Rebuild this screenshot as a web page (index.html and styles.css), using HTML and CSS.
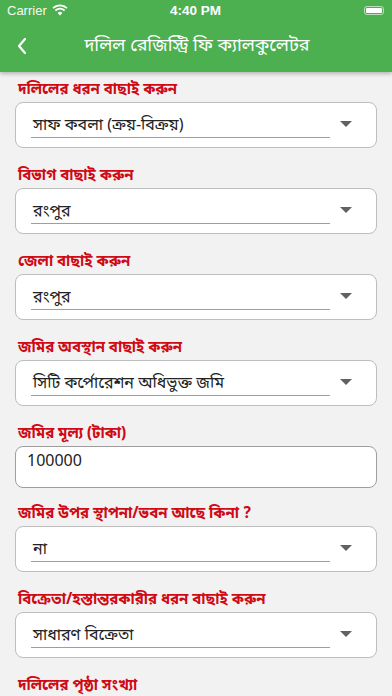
FILE: index.html
```html
<!DOCTYPE html>
<html lang="bn">
<head>
<meta charset="utf-8">
<link rel="stylesheet" href="styles.css">
</head>
<body>
<header class="appbar">
  <div class="status">
    <div class="status-left">
      <span class="carrier">Carrier</span>
      <svg class="wifi" width="16" height="12" viewBox="0 0 16 12"><path d="M8 11.5 L5.6 8.9 A3.4 3.4 0 0 1 10.4 8.9 Z" fill="#fff"/><path d="M3.4 6.6 A6.5 6.5 0 0 1 12.6 6.6" stroke="#fff" stroke-width="1.8" fill="none"/><path d="M1.1 4.2 A9.8 9.8 0 0 1 14.9 4.2" stroke="#fff" stroke-width="1.8" fill="none"/></svg>
    </div>
    <span class="time">4:40 PM</span>
    <div class="status-right">
      <div class="battery"><div class="battery-fill"></div></div>
    </div>
  </div>
  <div class="nav">
    <svg class="back" width="12" height="20" viewBox="0 0 12 20"><path d="M9 3 L3 10 L9 17" stroke="#fff" stroke-width="2.2" fill="none" stroke-linecap="round" stroke-linejoin="round"/></svg>
    <h1 class="title">দলিল রেজিস্ট্রি ফি ক্যালকুলেটর</h1>
  </div>
</header>
<main class="form">
  <div class="group">
    <label class="label">দলিলের ধরন বাছাই করুন</label>
    <div class="select"><span class="select-text">সাফ কবলা (ক্রয়-বিক্রয়)</span><span class="arrow"></span></div>
  </div>
  <div class="group">
    <label class="label">বিভাগ বাছাই করুন</label>
    <div class="select"><span class="select-text">রংপুর</span><span class="arrow"></span></div>
  </div>
  <div class="group">
    <label class="label">জেলা বাছাই করুন</label>
    <div class="select"><span class="select-text">রংপুর</span><span class="arrow"></span></div>
  </div>
  <div class="group">
    <label class="label">জমির অবস্থান বাছাই করুন</label>
    <div class="select"><span class="select-text">সিটি কর্পোরেশন অধিভুক্ত জমি</span><span class="arrow"></span></div>
  </div>
  <div class="group group-tight">
    <label class="label">জমির মূল্য (টাকা)</label>
    <div class="input">100000</div>
  </div>
  <div class="group">
    <label class="label">জমির উপর স্থাপনা/ভবন আছে কিনা ?</label>
    <div class="select"><span class="select-text">না</span><span class="arrow"></span></div>
  </div>
  <div class="group">
    <label class="label">বিক্রেতা/হস্তান্তরকারীর ধরন বাছাই করুন</label>
    <div class="select"><span class="select-text">সাধারণ বিক্রেতা</span><span class="arrow"></span></div>
  </div>
  <div class="group">
    <label class="label">দলিলের পৃষ্ঠা সংখ্যা</label>
  </div>
</main>
</body>
</html>
```
FILE: styles.css
```css
* { box-sizing: border-box; }
html, body { margin: 0; padding: 0; }
body {
  width: 392px;
  height: 696px;
  overflow: hidden;
  background: #f2f2f2;
  font-family: "Noto Sans Bengali", "Noto Sans", "Liberation Sans", sans-serif;
}
.appbar {
  background: #4caf50;
  height: 72px;
  box-shadow: 0 2px 4px rgba(0,0,0,0.25);
  position: relative;
  z-index: 1;
}
.status {
  height: 20px;
  display: flex;
  align-items: center;
  justify-content: space-between;
  padding: 0 8px 0 7px;
  color: #fff;
  font-family: "Liberation Sans", Arial, sans-serif;
}
.status-left, .status-right { display: flex; align-items: center; width: 90px; }
.status-right { justify-content: flex-end; }
.carrier { font-size: 13px; margin-right: 5px; opacity: 0.95; }
.time { font-size: 13.5px; font-weight: bold; }
.battery {
  width: 20px;
  height: 9px;
  border: 1px solid rgba(255,255,255,0.6);
  border-radius: 3px;
  padding: 1px;
}
.battery-fill { width: 100%; height: 100%; background: #fff; border-radius: 1px; }
.nav {
  height: 52px;
  display: flex;
  align-items: center;
  padding-left: 16px;
}
.back { flex: none; }
.title {
  margin: 0;
  flex: 1;
  text-align: center;
  color: #fff;
  font-size: 18px;
  font-weight: normal;
  padding-right: 26px;
  white-space: nowrap;
}
.form { padding: 6px 15px 0 15px; }
.group { display: flex; flex-direction: column; margin-bottom: 16px; }
.group-tight { margin-bottom: 14px; }
.label {
  height: 24px;
  line-height: 24px;
  font-size: 15px;
  font-weight: bold;
  color: #cf0a14;
  padding-left: 3px;
  white-space: nowrap;
}
.select {
  height: 46px;
  background: #fff;
  border: 1px solid #bdbdbd;
  border-radius: 8px;
  display: flex;
  align-items: center;
  padding: 0 24px 0 15px;
}
.select-text {
  flex: 0 0 299px;
  font-size: 16px;
  color: #222;
  line-height: 22px;
  border-bottom: 1px solid #9e9e9e;
  padding: 0 2px;
  margin-top: 2px;
  white-space: nowrap;
}
.arrow {
  margin-left: 10px;
  width: 0;
  height: 0;
  border-left: 6px solid transparent;
  border-right: 6px solid transparent;
  border-top: 6px solid #616161;
  margin-bottom: 2px;
}
.input {
  height: 42px;
  background: #fff;
  border: 1px solid #9e9e9e;
  border-radius: 8px;
  padding: 3px 11px 0;
  font-size: 16px;
  color: #222;
  line-height: 24px;
}
```
